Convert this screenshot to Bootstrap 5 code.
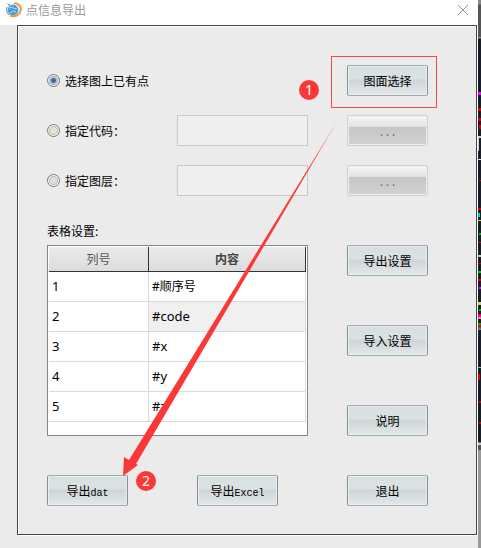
<!DOCTYPE html>
<html lang="zh-CN">
<head>
<meta charset="utf-8">
<meta name="viewport" content="width=device-width, initial-scale=1">
<title>点信息导出</title>
<link href="https://cdn.jsdelivr.net/npm/bootstrap@5.3.0/dist/css/bootstrap.min.css" rel="stylesheet">
<style>
body{font:12px/18px "Noto Sans CJK SC","Liberation Sans",sans-serif;color:#000;background:#ebebeb}
.dialog{min-width:0}
.titlebar{height:25px;padding:0 9px 6px 6px;color:#999}
.close-btn{line-height:0}
.panel{margin:0 1px 13px 17px;padding:39px 48px 28px 29px;border:1px solid #45454a;box-shadow:inset 1px 1px #fff,1px 1px #fff}
.option-row{height:31px;margin-bottom:19px}
.option{width:130px;gap:5px}
.option input{appearance:none;width:13px;height:13px;margin:0;border:1px solid #777;border-radius:50%;background:radial-gradient(circle,#ddd 0 3px,#bbb 4px,#f8f8f8 5px)}
.option input.warm{background:radial-gradient(circle,#e6e2d4 0 3px,#c0baa5 4px,#f8f8f8 5px)}
.option input:checked{background:radial-gradient(circle,#4a678f 0 2px,#b9cbe0 3px,#a0b0c2 4px,#eef4fa 5px)}
.field{height:31px;width:0;min-width:0;flex:1 1 0;margin-right:39px;padding:0 4px;background:#efefef;border:1px solid #c9c9c9}
.tool{width:81px;height:31px;padding:0;flex-shrink:0;font-size:12px;line-height:29px;color:#000;border:1px solid #a0abaf;border-left-color:#858f94;border-right-color:#858f94;border-radius:2px;background:linear-gradient(#d7dfe1,#dbe2e4 46%,#cdd3d6 47%,#e2e8ea);box-shadow:inset 0 0 0 1px #e6f0f2}
.tool:hover{color:#000}
.tool:disabled{opacity:1;color:#555;border-color:#d0d0d0;background:linear-gradient(#f8f8f8,#e0e0e0 38%,#c6c6c6 39%,#d2d2d2);box-shadow:inset 0 0 0 1px #eee}
.latin{font-family:"Liberation Mono",monospace;font-size:10px}
.marked::after{content:"";position:absolute;inset:-9px -9px -12px -16px;border:1px solid #f44;pointer-events:none}
.settings{margin-top:26px}
.side-tools{gap:49px}
.caption-line{margin-bottom:5px}
.grid-box{height:191px;margin-right:39px;padding:1px;border:1px solid #7e868e;background:#fff}
.data-grid{table-layout:fixed;border-collapse:separate;border-spacing:0}
.data-grid th{height:25px;padding:0;text-align:center;font-weight:400;color:#555;background:linear-gradient(#eaeaea,#dcdcdc);border-right:1px solid #333;border-bottom:1px solid #333}
.data-grid th:first-child{width:100px}
.data-grid th:last-child{font-weight:700;color:#444}
.data-grid td{height:30px;padding:0 3px;font-family:"Noto Sans","Noto Sans CJK SC",sans-serif;line-height:18px;border-right:1px solid #d8dce0;border-bottom:1px solid #d8dce0}
.data-grid .ascii{font-size:13px;padding-bottom:2px}
.data-grid .picked{background:#f0f0f0}
.bottom-tools{margin-top:39px}
.num{position:absolute;width:20px;height:20px;border-radius:50%;background:#fb3838;color:#fff;font:14px/20px "Noto Sans",sans-serif;text-align:center}
.num-one{left:281px;top:54px}
.num-two{left:118px;top:445px}
.arrow{position:absolute;left:105px;top:94px;pointer-events:none}
.canvas-edge{width:3px;background:
linear-gradient(#d0d0d0,#d0d0d0) 0 136px/3px 2px no-repeat,
linear-gradient(#f0f,#f0f) 0 92px/3px 3px no-repeat,
linear-gradient(#d00,#d00) 0 108px/3px 3px no-repeat,
linear-gradient(#d00,#d00) 0 118px/3px 3px no-repeat,
linear-gradient(#d00,#d00) 1px 125px/2px 4px no-repeat,
linear-gradient(#ccc,#ccc) 0 137px/1px 14px no-repeat,
linear-gradient(#ddd,#ddd) 0 159px/3px 1px no-repeat,
linear-gradient(#d00,#d00) 1px 180px/2px 1px no-repeat,
linear-gradient(#d00,#d00) 0 208px/3px 2px no-repeat,
linear-gradient(#0cc,#0cc) 0 213px/2px 4px no-repeat,
linear-gradient(#dd0,#dd0) 0 220px/3px 1px no-repeat,
linear-gradient(#0b0,#0b0) 1px 233px/2px 2px no-repeat,
linear-gradient(#d00,#d00) 0 242px/3px 1px no-repeat,
linear-gradient(#ccc,#ccc) 0 255px/3px 2px no-repeat,
linear-gradient(#d00,#d00) 0 263px/3px 1px no-repeat,
linear-gradient(#0c0,#0c0) 0 271px/3px 2px no-repeat,
linear-gradient(#d00,#d00) 0 279px/3px 2px no-repeat,
linear-gradient(#f0f,#f0f) 1px 287px/2px 2px no-repeat,
linear-gradient(#ccc,#dd0) 0 302px/3px 3px no-repeat,
linear-gradient(#0b0,#0b0) 1px 309px/2px 2px no-repeat,
linear-gradient(#d00,#f0f,#dd0) 0 314px/3px 5px no-repeat,
linear-gradient(#0b0,#d00,#0cc) 0 323px/3px 7px no-repeat,
linear-gradient(#aaa,#aaa) 0 367px/3px 1px no-repeat,
linear-gradient(#d00,#d00) 0 374px/2px 6px no-repeat,
linear-gradient(#d00,#d00) 1px 401px/2px 2px no-repeat,
linear-gradient(#d00,#d00) 1px 422px/2px 2px no-repeat,
linear-gradient(#888 0 4px,#555 5px 37px,#888 37px 38px,#161e29 39px 442px,#ccc 443px 445px,#555 445px 450px,#999 450px)}
</style>
<script src="https://cdn.jsdelivr.net/npm/bootstrap@5.3.0/dist/js/bootstrap.bundle.min.js"></script>
</head>
<body>
<div class="d-flex min-vh-100">
<main class="dialog flex-grow-1">
<header class="titlebar bg-white d-flex align-items-center">
<svg width="16" height="16" viewBox="0 0 16 16" aria-hidden="true"><circle cx="7" cy="8" r="5.4" fill="#4a9fd4"/><path d="M3 6l3-1 3 2 2-1M4 11l3-2 3 1" stroke="#a8d8f0" fill="none"/><path d="M8 1.200C13 1 15.600 5 14.500 9C13.500 13 9 15.500 4 13.500" fill="none" stroke="#ee9448" stroke-width="2"/><path d="M1 5C0 8 1 11 3 13" fill="none" stroke="#5b86a8"/><path d="M1 1l3 1.500L3 4z" fill="#667f99"/></svg>
<span class="ms-1">点信息导出</span>
<button type="button" class="close-btn btn p-0 border-0 ms-auto" aria-label="关闭"><svg width="12" height="12" viewBox="0 0 12 12"><path d="M1 1l10 10M11 1L1 11" stroke="#999" fill="none"/></svg></button>
</header>
<form class="panel position-relative">
<div class="option-row d-flex align-items-center">
<label class="option d-flex align-items-center text-nowrap"><input type="radio" name="source" checked>选择图上已有点</label>
<div class="position-relative marked ms-auto d-flex"><button type="button" class="btn tool">图面选择</button></div>
</div>
<div class="option-row d-flex align-items-center">
<label class="option d-flex align-items-center"><input class="warm" type="radio" name="source">指定代码：</label>
<input class="field" type="text" aria-label="指定代码" disabled>
<button type="button" class="btn tool" aria-label="选择代码" disabled><span class="latin">...</span></button>
</div>
<div class="option-row d-flex align-items-center mb-0">
<label class="option d-flex align-items-center"><input type="radio" name="source">指定图层：</label>
<input class="field" type="text" aria-label="指定图层" disabled>
<button type="button" class="btn tool" aria-label="选择图层" disabled><span class="latin">...</span></button>
</div>
<div class="settings d-flex align-items-end">
<div class="flex-grow-1">
<div class="caption-line" id="grid-title">表格设置:</div>
<div class="grid-box">
<table class="data-grid w-100" aria-labelledby="grid-title">
<thead><tr><th scope="col">列号</th><th scope="col">内容</th></tr></thead>
<tbody>
<tr><td class="ascii">1</td><td>#顺序号</td></tr>
<tr><td class="ascii">2</td><td class="ascii picked">#code</td></tr>
<tr><td class="ascii">3</td><td class="ascii">#x</td></tr>
<tr><td class="ascii">4</td><td class="ascii">#y</td></tr>
<tr><td class="ascii">5</td><td class="ascii">#z</td></tr>
</tbody>
</table>
</div>
</div>
<div class="side-tools d-flex flex-column">
<button type="button" class="btn tool">导出设置</button>
<button type="button" class="btn tool">导入设置</button>
<button type="button" class="btn tool">说明</button>
</div>
</div>
<div class="bottom-tools d-flex justify-content-between">
<button type="button" class="btn tool">导出<span class="latin">dat</span></button>
<button type="button" class="btn tool">导出<span class="latin">Excel</span></button>
<button type="button" class="btn tool">退出</button>
</div>
<svg class="arrow" width="217" height="358" viewBox="0 0 217 358" aria-hidden="true"><defs><linearGradient id="fade" x1="0" y1="1" x2="0" y2="0"><stop offset=".85" stop-color="#fb3838"/><stop offset="1" stop-color="#fb3838" stop-opacity=".5"/></linearGradient></defs><path d="M0 356L1 337L6 340L215 0L13 344L15 345z" fill="url(#fade)"/></svg>
<span class="num num-one">1</span>
<span class="num num-two">2</span>
</form>
</main>
<div class="canvas-edge flex-shrink-0" aria-hidden="true"></div>
</div>
</body>
</html>
